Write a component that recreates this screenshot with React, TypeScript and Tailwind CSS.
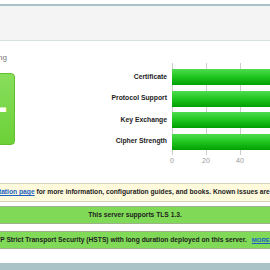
const scores = [
  { label: "Certificate", value: 100 },
  { label: "Protocol Support", value: 100 },
  { label: "Key Exchange", value: 90 },
  { label: "Cipher Strength", value: 90 },
];

const ticks = ["0", "20", "40", "60", "80", "100"];

export default function App() {
  return (
    <div className="w-[270px] h-[270px] overflow-hidden bg-white font-['Liberation_Sans',Arial,sans-serif]">
      {/* Page header band */}
      <div className="mt-[4px] h-[2px] bg-[#a9c3c7]" />
      <div className="h-[35px] bg-[#f4f4f4] border-b border-[#d3e1e1]" />

      {/* Summary */}
      <div className="flex">
        <div className="-ml-[52px] w-[67px] shrink-0">
          <div className="pt-[12px] text-center text-[8px] leading-[10px] text-[#777]">Overall Rating</div>
          <div className="mt-[10px] h-[72px] rounded-[4px] border border-[#62bf2f] bg-[linear-gradient(to_bottom,#88de5c,#6cd138)] flex items-center justify-center text-[40px] font-bold text-white leading-none">
            A+
          </div>
        </div>

        <div className="pt-[22px]">
          <div className="flex">
            <div className="w-[152px] pt-[6px] flex flex-col gap-[5.5px] text-right text-[6.8px] font-bold text-[#222]">
              {scores.map((s) => (
                <div key={s.label} className="h-[16px] flex items-center justify-end">
                  {s.label}
                </div>
              ))}
            </div>
            <div className="ml-[5px] relative w-[200px] pt-[6px] pb-[5.5px] flex flex-col gap-[5.5px]">
              <div className="absolute inset-0 flex">
                {ticks.map((t) => (
                  <div key={t} className="w-[34px] shrink-0 border-l border-[#cccccc]" />
                ))}
              </div>
              {scores.map((s) => (
                <div
                  key={s.label}
                  className="relative h-[16px] bg-[linear-gradient(to_bottom,#4fdc4f,#22c822_45%,#009f00)]"
                  style={{ width: `${s.value * 1.7}px` }}
                />
              ))}
            </div>
          </div>
          <div className="flex mt-[2px] ml-[140px] text-[7px] leading-[8px] text-[#999]">
            {ticks.map((t) => (
              <div key={t} className="w-[34px] shrink-0 text-center">
                {t}
              </div>
            ))}
          </div>
        </div>
      </div>

      {/* Notices */}
      <div className="-mx-[100px] mt-[18px] flex flex-col gap-[4px] text-[6.7px] font-bold text-[#222]">
        <div className="h-[19px] flex items-center justify-center whitespace-nowrap border border-[#d6d3bd] bg-[#fffadc]">
          Visit our&nbsp;<span className="text-[#1a5fc4] underline">documentation page</span>&nbsp;for more information, configuration guides, and books. Known issues are documented here.
        </div>
        <div className="h-[18px] flex items-center justify-center whitespace-nowrap border border-[#9cb08c] bg-[#80da58]">
          This server supports TLS 1.3.
        </div>
        <div className="mt-[3px] h-[18px] pl-[8px] flex items-center justify-center whitespace-nowrap border border-[#9cb08c] bg-[#80da58]">
          HTTP Strict Transport Security (HSTS) with long duration deployed on this server.
          <span className="ml-[5px] text-[6px] text-[#1a5fc4] underline">MORE INFO »</span>
        </div>
      </div>

      <div className="mt-[14px] h-[8px] bg-[#a9c3c7]" />
    </div>
  );
}
